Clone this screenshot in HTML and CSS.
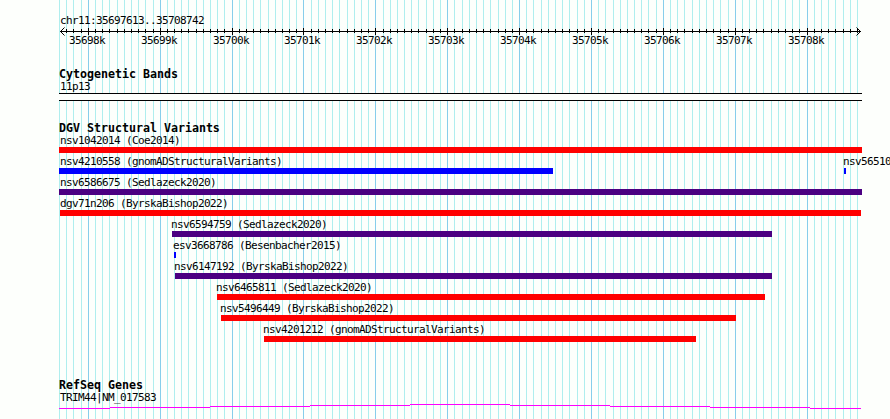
FILE: index.html
```
<!DOCTYPE html>
<html lang="en">
<head>
    <meta charset="UTF-8">
    <meta name="viewport" content="width=device-width, initial-scale=1.0">
    <title>chr11:35697613..35708742</title>
    <link rel="stylesheet" href="styles.css">
</head>
<body>
    <div class="browser">
        <svg class="grid" id="grid" width="890" height="419" shape-rendering="crispEdges"></svg>

        <div class="tracks">
            <div class="region">chr11:35697613..35708742</div>
            <svg class="ruler" id="ruler" width="890" height="22"></svg>

            <div class="track-title bands-title">Cytogenetic Bands</div>
            <div class="band-label">11p13</div>
            <div class="band"></div>

            <div class="track-title variants-title">DGV Structural Variants</div>
            <div class="variants" id="variants"></div>

            <div class="track-title genes-title">RefSeq Genes</div>
            <div class="gene-label">TRIM44|NM_017583</div>
            <svg class="gene" width="890" height="6" shape-rendering="crispEdges">
                <path d="M59 5.5H110M110 4.5H210M210 3.5H310M310 2.5H410M410 1.5H510M510 2.5H610M610 3.5H710M710 4.5H810M810 5.5H861"/>
            </svg>
        </div>
    </div>

    <script>
        const start = 35697613;
        const end = 35708742;
        const scale = 800 / (end - start + 1);

        function toX(pos) {
            return Math.round(60 + (pos - start) * scale);
        }

        // Grid lines and ruler ticks, every 100 bases
        let grid = '';
        let ruler = '<path class="axis" d="M60 7.5H861M64.5 3.5L60.5 7.5L64.5 11.5M856.5 3.5L860.5 7.5L856.5 11.5"/>';
        for (let pos = 35697600; pos <= 35708700; pos += 100) {
            const x = toX(pos);
            const major = pos % 1000 === 0;
            grid += `<rect class="${major ? 'major' : 'minor'}" x="${x}" y="0" width="1" height="419"/>`;
            if (major) {
                ruler += `<rect x="${x}" y="4" width="1" height="7"/>`;
                ruler += `<text x="${x - 19}" y="20">${pos / 1000}k</text>`;
            } else if (pos > start) {
                ruler += `<rect x="${x}" y="5" width="1" height="4"/>`;
            }
        }
        document.getElementById('grid').innerHTML = grid;
        document.getElementById('ruler').innerHTML = ruler;

        // Each row holds features as [label, left, right, type, label x]
        const rows = [
            [['nsv1042014 (Coe2014)', 59, 862, 'loss', 60]],
            [['nsv4210558 (gnomADStructuralVariants)', 59, 553, 'gain', 60],
             ['nsv56510', 844, 846, 'gain', 843]],
            [['nsv6586675 (Sedlazeck2020)', 59, 862, 'complex', 60]],
            [['dgv71n206 (ByrskaBishop2022)', 60, 861, 'loss', 60]],
            [['nsv6594759 (Sedlazeck2020)', 172, 772, 'complex', 171]],
            [['esv3668786 (Besenbacher2015)', 174, 176, 'gain', 173]],
            [['nsv6147192 (ByrskaBishop2022)', 175, 772, 'complex', 174]],
            [['nsv6465811 (Sedlazeck2020)', 217, 765, 'loss', 216]],
            [['nsv5496449 (ByrskaBishop2022)', 221, 736, 'loss', 220]],
            [['nsv4201212 (gnomADStructuralVariants)', 264, 696, 'loss', 263]]
        ];

        const variants = document.getElementById('variants');
        rows.forEach(features => {
            const row = document.createElement('div');
            row.className = 'row';
            features.forEach(([label, left, right, type, labelX]) => {
                const feature = document.createElement('div');
                feature.className = 'feature';
                feature.innerHTML =
                    `<div class="label" style="padding-left: ${labelX}px">${label}</div>` +
                    `<div class="bar ${type}" style="margin-left: ${left}px; width: ${right - left}px"></div>`;
                row.appendChild(feature);
            });
            variants.appendChild(row);
        });
    </script>
</body>
</html>
```
FILE: styles.css
```
* {
    margin: 0;
    padding: 0;
    box-sizing: border-box;
}

body {
    background: #fdfffc;
    color: #000;
    font-family: 'DejaVu Sans Mono', monospace;
    font-size: 11px;
    letter-spacing: -0.622px;
    overflow: hidden;
}

svg {
    display: block;
}

.browser {
    display: grid;
    width: 890px;
    height: 419px;
    overflow: hidden;
}

.grid,
.tracks {
    grid-area: 1 / 1;
}

.grid .minor {
    fill: #afeeee;
}

.grid .major {
    fill: #87ceeb;
}

.tracks {
    min-width: 0;
    white-space: nowrap;
}

.region {
    height: 24px;
    padding: 15px 0 0 60px;
    line-height: 12px;
}

.ruler {
    overflow: visible;
}

.ruler .axis {
    fill: none;
    stroke: #000;
}

.track-title {
    height: 12px;
    padding-left: 59px;
    font-size: 11.65px;
    font-weight: bold;
    line-height: 12px;
    letter-spacing: -0.014px;
}

.bands-title {
    margin-top: 22px;
}

.band-label {
    height: 13px;
    padding-left: 60px;
    line-height: 13px;
}

.band {
    width: 803px;
    height: 8px;
    margin-left: 59px;
    background: #fdfffc;
    border-top: 1px solid #000;
    border-bottom: 1px solid #000;
}

.variants-title {
    margin-top: 21px;
    height: 10px;
}

.row {
    display: grid;
    height: 21px;
}

.feature {
    grid-area: 1 / 1;
    min-width: 0;
}

.label {
    height: 15px;
    line-height: 17px;
}

.bar {
    height: 6px;
}

.loss {
    background: #f00;
}

.gain {
    background: #00f;
}

.complex {
    background: #4b0082;
}

.genes-title {
    margin-top: 37px;
}

.gene-label {
    height: 12px;
    padding-left: 60px;
    line-height: 13px;
}

.gene path {
    fill: none;
    stroke: #f0f;
}
```
